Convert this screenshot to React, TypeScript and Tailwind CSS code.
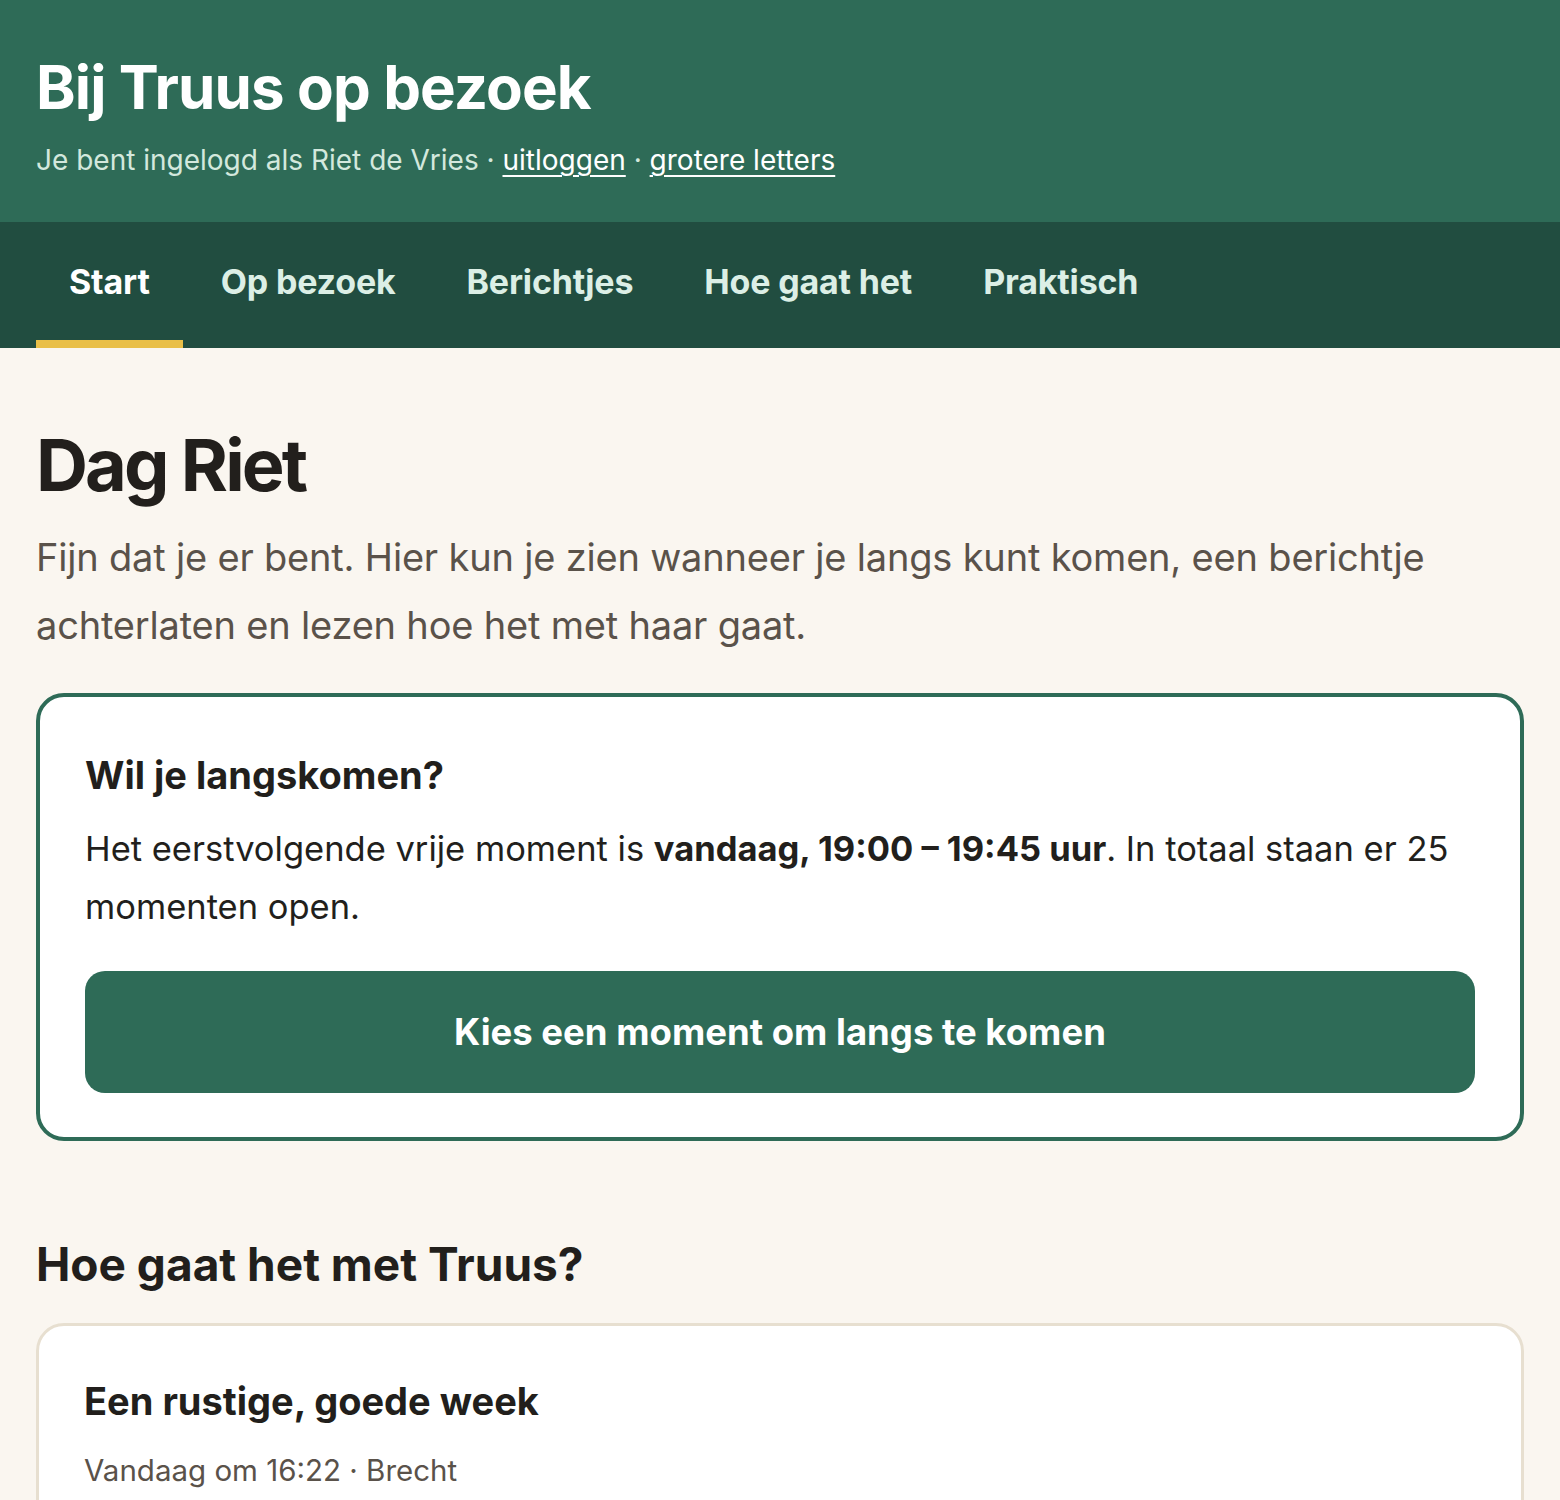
import React from 'react';

const tabs = ['Start', 'Op bezoek', 'Berichtjes', 'Hoe gaat het', 'Praktisch'];

export default function App() {
  return (
    <div className="min-h-[1500px] bg-[#faf6f0] font-['Inter','Noto_Sans',sans-serif] text-[#221f1c]">
      <header className="bg-[#2e6b57] px-9 pt-[52px] pb-[41px]">
        <h1 className="text-[60px] font-bold leading-[70px] tracking-[-0.015em] text-white">
          Bij Truus op bezoek
        </h1>
        <p className="mt-[17px] text-[28px] leading-[42px] text-[#d3e8dd]">
          Je bent ingelogd als Riet de Vries ·{' '}
          <a href="#" className="text-white underline underline-offset-[5px] decoration-2">
            uitloggen
          </a>{' '}
          ·{' '}
          <a href="#" className="text-white underline underline-offset-[5px] decoration-2">
            grotere letters
          </a>
        </p>
      </header>

      <nav className="bg-[#214d40] px-9">
        <ul className="flex gap-[5px]">
          {tabs.map((tab, i) => (
            <li key={tab}>
              <a
                href="#"
                className={`block px-[33px] pt-[34px] pb-[33px] border-b-8 text-[34px] font-bold leading-[51px] tracking-[-0.005em] ${
                  i === 0 ? 'border-[#e9bf48] text-white' : 'border-transparent text-[#dcefe6]'
                }`}
              >
                {tab}
              </a>
            </li>
          ))}
        </ul>
      </nav>

      <main className="px-9 pt-[77px]">
        <h2 className="text-[72px] font-bold leading-[79px] tracking-[-0.04em]">Dag Riet</h2>
        <p className="mt-[19px] text-[38px] leading-[68px] tracking-[-0.005em] text-[#5a524a]">
          Fijn dat je er bent. Hier kun je zien wanneer je langs kunt komen, een berichtje
          achterlaten en lezen hoe het met haar gaat.
        </p>

        <section className="mt-[34px] rounded-[28px] border-4 border-[#2e6b57] bg-white px-[45px] pt-[54px] pb-[44px]">
          <h3 className="text-[38px] font-bold leading-[48px]">Wil je langskomen?</h3>
          <p className="mt-[21px] text-[34.5px] leading-[58px]">
            Het eerstvolgende vrije moment is <b>vandaag, 19:00 – 19:45 uur</b>. In totaal staan er 25
            momenten open.
          </p>
          <button className="mt-[35px] flex h-[122px] w-full items-center justify-center rounded-[20px] bg-[#2e6b57] text-[36.5px] font-bold text-white">
            Kies een moment om langs te komen
          </button>
        </section>

        <h2 className="mt-[96px] text-[46px] font-bold leading-[55px]">Hoe gaat het met Truus?</h2>
        <article className="mt-[31px] rounded-[28px] border-[3px] border-[#e7dfd0] bg-white px-[45px] pt-[51px] pb-[120px]">
          <h3 className="text-[38px] font-bold leading-[48px]">Een rustige, goede week</h3>
          <p className="mt-[23px] text-[29.5px] leading-[45px] text-[#5a524a]">Vandaag om 16:22 · Brecht</p>
        </article>
      </main>
    </div>
  );
}
